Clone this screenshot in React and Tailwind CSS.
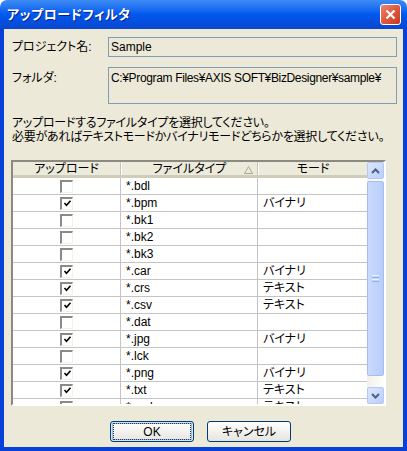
import React from 'react';

const rows = [
    { ext: '*.bdl', on: false, mode: '' },
    { ext: '*.bpm', on: true, mode: 'バイナリ' },
    { ext: '*.bk1', on: false, mode: '' },
    { ext: '*.bk2', on: false, mode: '' },
    { ext: '*.bk3', on: false, mode: '' },
    { ext: '*.car', on: true, mode: 'バイナリ' },
    { ext: '*.crs', on: true, mode: 'テキスト' },
    { ext: '*.csv', on: true, mode: 'テキスト' },
    { ext: '*.dat', on: false, mode: '' },
    { ext: '*.jpg', on: true, mode: 'バイナリ' },
    { ext: '*.lck', on: false, mode: '' },
    { ext: '*.png', on: true, mode: 'バイナリ' },
    { ext: '*.txt', on: true, mode: 'テキスト' },
    { ext: '*.xml', on: true, mode: 'テキスト' },
];

const CheckBox = ({ on }) => (
    <div className="w-[13px] h-[13px] bg-white border-t-[2px] border-l-[2px] border-b border-r border-t-[#8a8a86] border-l-[#8a8a86] border-b-[#f2f1ea] border-r-[#f2f1ea] flex items-center justify-center">
        {on && (
            <svg width="9" height="9" viewBox="0 0 9 9">
                <path d="M1.5 4 L3.5 6.2 L7.5 1.8" fill="none" stroke="#000" strokeWidth="1.6" />
            </svg>
        )}
    </div>
);

const Arrow = ({ down }) => (
    <svg width="9" height="6" viewBox="0 0 9 6">
        <path d={down ? 'M1 1 L4.5 4.5 L8 1' : 'M1 5 L4.5 1.5 L8 5'} fill="none" stroke="#4d6185" strokeWidth="2" />
    </svg>
);

const XpButton = ({ children, primary }) => (
    <button className={`w-[84px] h-[21px] rounded-[3px] border border-[#003c74] bg-gradient-to-b from-white to-[#e6e5de] text-[12px] text-black flex items-center justify-center ${primary ? 'shadow-[inset_0_0_0_1px_#cee7ff,inset_0_0_0_2px_#98b8ea]' : ''}`}>
        <span className={`${primary ? 'outline outline-1 outline-dotted outline-[#333] w-[76px] h-[15px] flex items-center justify-center' : ''}`}>{children}</span>
    </button>
);

export default function App() {
    return (
        <div className="w-[407px] h-[451px] bg-white flex flex-col [font-family:'Liberation_Sans','Noto_Sans_CJK_JP',sans-serif] [font-feature-settings:'palt'] text-black">
            {/* title bar */}
            <div className="h-[29px] rounded-t-[7px] bg-gradient-to-b from-[#3d8bf5] via-[#0058ee] to-[#0a46d0] flex items-center justify-between pl-[7px] pr-[6px] shrink-0">
                <span className="text-white font-bold text-[13px] tracking-[0.5px] [text-shadow:1px_1px_0_#0a1e8c]">アップロードフィルタ</span>
                <div className="w-[21px] h-[21px] rounded-[3px] border border-white bg-gradient-to-br from-[#e9876b] via-[#e0583b] to-[#c4391d] flex items-center justify-center">
                    <svg width="11" height="11" viewBox="0 0 11 11">
                        <path d="M1.5 1.5 L9.5 9.5 M9.5 1.5 L1.5 9.5" stroke="#fff" strokeWidth="2.2" />
                    </svg>
                </div>
            </div>

            {/* body */}
            <div className="flex-1 bg-[#ece9d8] border-l-[4px] border-r-[4px] border-b-[4px] border-[#0841d8] flex flex-col text-[12px]">
                <div className="flex items-center pt-[8px]">
                    <span className="w-[104px] pl-[8px]">プロジェクト名:</span>
                    <div className="w-[289px] h-[20px] border border-[#7f9db9] pl-[2px] flex items-center">Sample</div>
                </div>
                <div className="flex items-start mt-[10px]">
                    <span className="w-[104px] pl-[8px] pt-[2px]">フォルダ:</span>
                    <div className="w-[289px] h-[37px] border border-[#7f9db9] pl-[2px] pt-[1px] whitespace-nowrap overflow-hidden tracking-[-0.35px]">C:¥Program Files¥AXIS SOFT¥BizDesigner¥sample¥</div>
                </div>
                <div className="mt-[12px] pl-[8px] leading-[14px] tracking-[-0.25px] whitespace-nowrap">
                    <div>アップロードするファイルタイプを選択してください。</div>
                    <div>必要があればテキストモードかバイナリモードどちらかを選択してください。</div>
                </div>

                {/* list */}
                <div className="mt-[16px] ml-[7px] w-[375px] h-[246px] border-t-[2px] border-l-[2px] border-t-[#8c8a80] border-l-[#8c8a80] border-b-[2px] border-r-[2px] border-b-white border-r-white flex overflow-hidden">
                    <div className="w-[354px] flex flex-col bg-white overflow-hidden">
                        <div className="h-[16px] shrink-0 flex bg-[#ebeadb] border-b-[3px] border-[#d0ccbb]">
                            <div className="w-[108px] flex items-center justify-center border-r border-[#c7c5b2] leading-none pt-[1px]">アップロード</div>
                            <div className="w-[137px] relative flex items-center justify-center border-r border-[#c7c5b2] border-l border-l-white leading-none pt-[1px]">
                                ファイルタイプ
                                <svg className="absolute right-[4px] top-[4px]" width="9" height="8" viewBox="0 0 9 8">
                                    <path d="M4.5 0.5 L8.5 7.5 L0.5 7.5 Z" fill="none" stroke="#aca899" strokeWidth="1" />
                                </svg>
                            </div>
                            <div className="w-[109px] flex items-center justify-center border-l border-l-white leading-none pt-[1px]">モード</div>
                        </div>
                        {rows.map((r) => (
                            <div key={r.ext} className="h-[17px] shrink-0 flex border-b border-[#c4c4c4]">
                                <div className="w-[108px] flex items-center justify-center border-r border-[#c4c4c4]">
                                    <CheckBox on={r.on} />
                                </div>
                                <div className="w-[137px] flex items-center pl-[5px] border-r border-[#c4c4c4]">{r.ext}</div>
                                <div className="w-[109px] flex items-center pl-[5px]">{r.mode}</div>
                            </div>
                        ))}
                    </div>
                    {/* scrollbar */}
                    <div className="w-[17px] flex flex-col bg-gradient-to-r from-[#f3f1ec] to-[#fefefb]">
                        <div className="h-[17px] rounded-[2px] border border-[#b4c8f6] bg-gradient-to-br from-[#dce7fd] to-[#b9cefa] flex items-center justify-center">
                            <Arrow />
                        </div>
                        <div className="mt-[2px] h-[195px] rounded-[2px] border border-[#a7bdf0] bg-gradient-to-r from-[#cbdafc] to-[#b7cdfb] flex items-center justify-center">
                            <div className="flex flex-col gap-[1px]">
                                <div className="w-[7px] h-[1px] bg-[#eef3fe]" />
                                <div className="w-[7px] h-[1px] bg-[#8cb0f8]" />
                                <div className="w-[7px] h-[1px] bg-[#eef3fe]" />
                                <div className="w-[7px] h-[1px] bg-[#8cb0f8]" />
                            </div>
                        </div>
                        <div className="flex-1" />
                        <div className="h-[17px] rounded-[2px] border border-[#b4c8f6] bg-gradient-to-br from-[#dce7fd] to-[#b9cefa] flex items-center justify-center">
                            <Arrow down />
                        </div>
                    </div>
                </div>

                <div className="mt-[15px] flex justify-center gap-[13px] pr-[6px]">
                    <XpButton primary>OK</XpButton>
                    <XpButton>キャンセル</XpButton>
                </div>
            </div>
        </div>
    );
}
